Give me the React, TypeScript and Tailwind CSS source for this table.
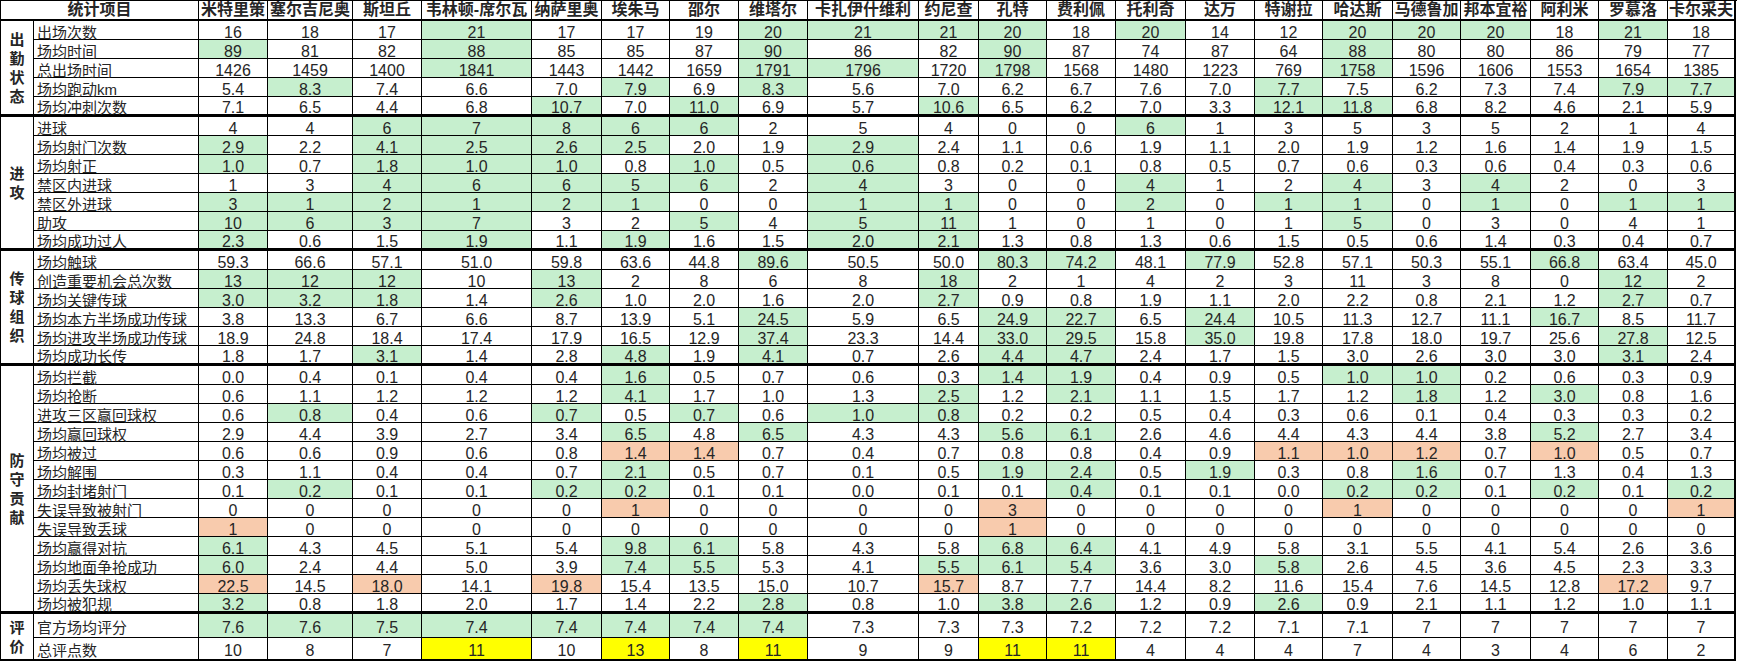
const players = [
  '米特里策', '塞尔吉尼奥', '斯坦丘', '韦林顿-席尔瓦', '纳萨里奥', '埃朱马', '邵尔',
  '维塔尔', '卡扎伊什维利', '约尼查', '孔特', '费利佩', '托利奇', '达万', '特谢拉',
  '哈达斯', '马德鲁加', '邦本宜裕', '阿利米', '罗慕洛', '卡尔采夫',
]

// g = green (good), r = salmon (bad), y = yellow (top score)
const sections: { title: string[]; rows: [string, string][] }[] = [
  {
    title: ['出', '勤', '状', '态'],
    rows: [
      ['出场次数', '16 18 17 21g 17 17 19 20g 21g 21g 20g 18 20g 14 12 20g 20g 20g 18 21g 18'],
      ['场均时间', '89g 81 82 88g 85 85 87 90g 86 82 90g 87 74 87 64 88g 80 80 86 79 77'],
      ['总出场时间', '1426 1459 1400 1841g 1443 1442 1659 1791g 1796g 1720 1798g 1568 1480 1223 769 1758g 1596 1606 1553 1654 1385'],
      ['场均跑动km', '5.4 8.3g 7.4 6.6 7.0 7.9g 6.9 8.3g 5.6 7.0 6.2 6.7 7.6 7.0 7.7g 7.5 6.2 7.3 7.4 7.9g 7.7g'],
      ['场均冲刺次数', '7.1 6.5 4.4 6.8 10.7g 7.0 11.0g 6.9 5.7 10.6g 6.5 6.2 7.0 3.3 12.1g 11.8g 6.8 8.2 4.6 2.1 5.9'],
    ],
  },
  {
    title: ['进', '攻'],
    rows: [
      ['进球', '4 4 6g 7g 8g 6g 6g 2 5 4 0 0 6g 1 3 5 3 5 2 1 4'],
      ['场均射门次数', '2.9g 2.2 4.1g 2.5g 2.6g 2.5g 2.0 1.9 2.9g 2.4 1.1 0.6 1.9 1.1 2.0 1.9 1.2 1.6 1.4 1.9 1.5'],
      ['场均射正', '1.0g 0.7 1.8g 1.0g 1.0g 0.8 1.0g 0.5 0.6g 0.8 0.2 0.1 0.8 0.5 0.7 0.6 0.3 0.6 0.4 0.3 0.6'],
      ['禁区内进球', '1 3 4g 6g 6g 5g 6g 2 4g 3 0 0 4g 1 2 4g 3 4g 2 0 3'],
      ['禁区外进球', '3g 1g 2g 1g 2g 1g 0 0 1g 1g 0 0 2g 0 1g 1g 0 1g 0 1g 1g'],
      ['助攻', '10g 6g 3g 7g 3 2 5g 4 5g 11g 1 0 1 0 1 5g 0 3 0 4 1'],
      ['场均成功过人', '2.3g 0.6 1.5 1.9g 1.1 1.9g 1.6 1.5 2.0g 2.1g 1.3 0.8 1.3 0.6 1.5 0.5 0.6 1.4 0.3 0.4 0.7'],
    ],
  },
  {
    title: ['传', '球', '组', '织'],
    rows: [
      ['场均触球', '59.3 66.6 57.1 51.0 59.8 63.6 44.8 89.6g 50.5 50.0 80.3g 74.2g 48.1 77.9g 52.8 57.1 50.3 55.1 66.8g 63.4 45.0'],
      ['创造重要机会总次数', '13g 12g 12g 10 13g 2 8 6 8 18g 2 1 4 2 3 11 3 8 0 12g 2'],
      ['场均关键传球', '3.0g 3.2g 1.8g 1.4 2.6g 1.0 2.0 1.6 2.0 2.7g 0.9 0.8 1.9 1.1 2.0 2.2 0.8 2.1 1.2 2.7g 0.7'],
      ['场均本方半场成功传球', '3.8 13.3 6.7 6.6 8.7 13.9 5.1 24.5g 5.9 6.5 24.9g 22.7g 6.5 24.4g 10.5 11.3 12.7 11.1 16.7g 8.5 11.7'],
      ['场均进攻半场成功传球', '18.9 24.8 18.4 17.4 17.9 16.5 12.9 37.4g 23.3 14.4 33.0g 29.5g 15.8 35.0g 19.8 17.8 18.0 19.7 25.6 27.8g 12.5'],
      ['场均成功长传', '1.8 1.7 3.1g 1.4 2.8 4.8g 1.9 4.1g 0.7 2.6 4.4g 4.7g 2.4 1.7 1.5 3.0 2.6 3.0 3.0 3.1g 2.4'],
    ],
  },
  {
    title: ['防', '守', '贡', '献'],
    rows: [
      ['场均拦截', '0.0 0.4 0.1 0.4 0.4 1.6g 0.5 0.7 0.6 0.3 1.4g 1.9g 0.4 0.9 0.5 1.0g 1.0g 0.2 0.6 0.3 0.9'],
      ['场均抢断', '0.6 1.1 1.2 1.2 1.2 4.1g 1.7 1.0 1.3 2.5g 1.2 2.1g 1.1 1.5 1.7 1.2 1.8g 1.2 3.0g 0.8 1.6'],
      ['进攻三区赢回球权', '0.6 0.8g 0.4 0.6 0.7g 0.5 0.7g 0.6 1.0g 0.8g 0.2 0.2 0.5 0.4 0.3 0.6 0.1 0.4 0.3 0.3 0.2'],
      ['场均赢回球权', '2.9 4.4 3.9 2.7 3.4 6.5g 4.8 6.5g 4.3 4.3 5.6g 6.1g 2.6 4.6 4.4 4.3 4.4 3.8 5.2g 2.7 3.4'],
      ['场均被过', '0.6 0.6 0.9 0.6 0.8 1.4r 1.4r 0.7 0.4 0.7 0.8 0.8 0.4 0.9 1.1r 1.0r 1.2r 0.7 1.0r 0.5 0.7'],
      ['场均解围', '0.3 1.1 0.4 0.4 0.7 2.1g 0.5 0.7 0.1 0.5 1.9g 2.4g 0.5 1.9g 0.3 0.8 1.6g 0.7 1.3 0.4 1.3'],
      ['场均封堵射门', '0.1 0.2g 0.1 0.1 0.2g 0.2g 0.1 0.1 0.0 0.1 0.1 0.4g 0.1 0.1 0.0 0.2g 0.2g 0.1 0.2g 0.1 0.2g'],
      ['失误导致被射门', '0 0 0 0 0 1r 0 0 0 0 3r 0 0 0 0 1r 0 0 0 0 1r'],
      ['失误导致丢球', '1r 0 0 0 0 0 0 0 0 0 1r 0 0 0 0 0 0 0 0 0 0'],
      ['场均赢得对抗', '6.1g 4.3 4.5 5.1 5.4 9.8g 6.1g 5.8 4.3 5.8 6.8g 6.4g 4.1 4.9 5.8 3.1 5.5 4.1 5.4 2.6 3.6'],
      ['场均地面争抢成功', '6.0g 2.4 4.4 5.0 3.9 7.4g 5.5g 5.3 4.1 5.5g 6.1g 5.4g 3.6 3.0 5.8g 2.6 4.5 3.6 4.5 2.3 3.3'],
      ['场均丢失球权', '22.5r 14.5 18.0r 14.1 19.8r 15.4 13.5 15.0 10.7 15.7r 8.7 7.7 14.4 8.2 11.6 15.4 7.6 14.5 12.8 17.2r 9.7'],
      ['场均被犯规', '3.2g 0.8 1.8 2.0 1.7 1.4 2.2 2.8g 0.8 1.0 3.8g 2.6g 1.2 0.9 2.6g 0.9 2.1 1.1 1.2 1.0 1.1'],
    ],
  },
  {
    title: ['评', '价'],
    rows: [
      ['官方场均评分', '7.6g 7.6g 7.5g 7.4g 7.4g 7.4g 7.4g 7.4g 7.3 7.3 7.3 7.2 7.2 7.2 7.1 7.1 7 7 7 7 7'],
      ['总评点数', '10 8 7 11y 10 13y 8 11y 9 9 11y 11y 4 4 4 7 4 3 4 6 2'],
    ],
  },
]

const fills: Record<string, string> = {
  g: 'bg-[#c6efce]',
  r: 'bg-[#f8cbad]',
  y: 'bg-[#ffff00]',
}

function rowStyle(si: number, ri: number, count: number) {
  const last = ri === count - 1
  if (si === sections.length - 1) {
    return last ? 'h-[23px] border-b-2 pt-[3px]' : 'h-[24px] pt-[4px]'
  }
  return last ? 'h-[20px] border-b-[3px] pt-[1px]' : 'h-[19px] pt-[2px]'
}

export default function App() {
  return (
    <div className="w-[1737px] h-[662px] bg-white font-['Liberation_Sans','Noto_Sans_CJK_SC',sans-serif] text-[#262626]">
      <div className="grid grid-cols-[33px_165px_69px_85px_69px_110px_70px_68px_69px_69px_111px_60px_68px_69px_70px_69px_68px_70px_68px_70px_68px_69px_68px] border-l border-t border-black">
        {/* header */}
        <div className="col-span-2 h-[20px] border-r border-b-2 border-black text-center text-[16px] font-bold leading-[18px]">
          统计项目
        </div>
        {players.map((p, i) => (
          <div
            key={p}
            className={`h-[20px] border-b-2 border-black text-center text-[16px] font-bold leading-[18px] whitespace-nowrap ${
              i === players.length - 1 ? 'border-r-2' : 'border-r'
            }`}
          >
            {p}
          </div>
        ))}

        {sections.map((sec, si) => {
          const lastSection = si === sections.length - 1
          return [
            <div
              key={`cat-${si}`}
              style={{ gridRow: `span ${sec.rows.length}` }}
              className={`flex flex-col items-center justify-center border-r border-black text-[15px] font-bold leading-[19px] ${
                lastSection ? 'border-b-2' : 'border-b-[3px]'
              }`}
            >
              {sec.title.map((c) => (
                <span key={c}>{c}</span>
              ))}
            </div>,
            ...sec.rows.flatMap(([label, data], ri) => {
              const rs = rowStyle(si, ri, sec.rows.length)
              const cells = data.split(' ')
              return [
                <div
                  key={`l-${si}-${ri}`}
                  className={`border-r border-b border-black pl-[3px] text-[15px] leading-[19px] whitespace-nowrap ${rs}`}
                >
                  {label}
                </div>,
                ...cells.map((v, ci) => {
                  const tag = v.slice(-1)
                  const fill = fills[tag] ?? ''
                  const text = fill ? v.slice(0, -1) : v
                  return (
                    <div
                      key={`c-${si}-${ri}-${ci}`}
                      className={`border-b border-black text-center text-[16px] leading-[19px] ${rs} ${fill} ${
                        ci === cells.length - 1 ? 'border-r-2' : 'border-r'
                      }`}
                    >
                      {text}
                    </div>
                  )
                }),
              ]
            }),
          ]
        })}
      </div>
    </div>
  )
}
